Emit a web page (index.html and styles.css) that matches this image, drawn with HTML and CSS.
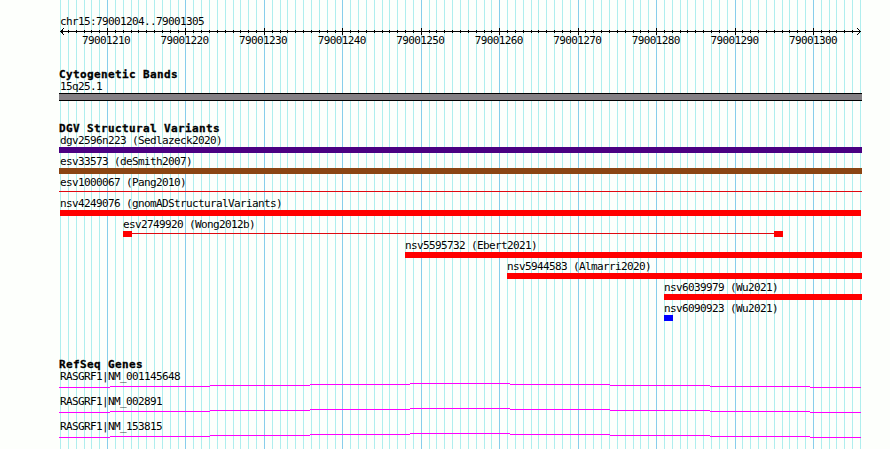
FILE: index.html
```
<!DOCTYPE html>
<html lang="en">
<head>
    <meta charset="UTF-8">
    <title>chr15:79001204..79001305</title>
    <link rel="stylesheet" href="styles.css">
</head>
<body>
    <div class="browser">
        <svg class="grid" width="890" height="449" shape-rendering="crispEdges">
            <path id="gridMinor" class="minor"/>
            <path id="gridMajor" class="major"/>
        </svg>

        <header class="ruler">
            <div class="label region">chr15:79001204..79001305</div>
            <svg class="axis" width="803" height="7" shape-rendering="crispEdges">
                <path id="ticks" d="M1 3h801v1h-801z"/>
                <path d="M2 2h1v3h-1zM3 1h1v5h-1zM4 0h1v1h-1zM4 6h1v1h-1zM800 2h1v3h-1zM799 1h1v1h-1zM799 5h1v1h-1zM798 0h1v1h-1zM798 6h1v1h-1z"/>
            </svg>
            <div class="positions">
                <span>79001210</span>
                <span>79001220</span>
                <span>79001230</span>
                <span>79001240</span>
                <span>79001250</span>
                <span>79001260</span>
                <span>79001270</span>
                <span>79001280</span>
                <span>79001290</span>
                <span>79001300</span>
            </div>
        </header>

        <section class="track cytobands">
            <h2>Cytogenetic Bands</h2>
            <div class="label full">15q25.1</div>
            <div class="band"></div>
        </section>

        <section class="track variants">
            <h2>DGV Structural Variants</h2>
            <div class="feature">
                <div class="label full">dgv2596n223 (Sedlazeck2020)</div>
                <div class="bar complex"></div>
            </div>
            <div class="feature">
                <div class="label full">esv33573 (deSmith2007)</div>
                <div class="bar gain-loss"></div>
            </div>
            <div class="feature">
                <div class="label full">esv1000067 (Pang2010)</div>
                <div class="bar thin"></div>
            </div>
            <div class="feature" style="margin-left: 1px; width: 801px">
                <div class="label">nsv4249076 (gnomADStructuralVariants)</div>
                <div class="bar loss"></div>
            </div>
            <div class="feature" style="margin-left: 64px; width: 660px">
                <div class="label">esv2749920 (Wong2012b)</div>
                <div class="bar thin ends"></div>
            </div>
            <div class="feature" style="margin-left: 346px; width: 457px">
                <div class="label">nsv5595732 (Ebert2021)</div>
                <div class="bar loss"></div>
            </div>
            <div class="feature" style="margin-left: 448px; width: 355px">
                <div class="label">nsv5944583 (Almarri2020)</div>
                <div class="bar loss"></div>
            </div>
            <div class="feature" style="margin-left: 605px; width: 198px">
                <div class="label">nsv6039979 (Wu2021)</div>
                <div class="bar loss"></div>
            </div>
            <div class="feature" style="margin-left: 605px; width: 9px">
                <div class="label">nsv6090923 (Wu2021)</div>
                <div class="bar gain"></div>
            </div>
        </section>

        <section class="track genes">
            <h2>RefSeq Genes</h2>
            <div class="gene">
                <div class="label full">RASGRF1|NM_001145648</div>
                <svg class="intron" width="803" height="5" shape-rendering="crispEdges"><path d="M0 4.5h51m0-1h100m0-1h100m0-1h100m0-1h100m0 1h100m0 1h100m0 1h100m0 1h51"/></svg>
            </div>
            <div class="gene">
                <div class="label full">RASGRF1|NM_002891</div>
                <svg class="intron" width="803" height="5" shape-rendering="crispEdges"><path d="M0 4.5h51m0-1h100m0-1h100m0-1h100m0-1h100m0 1h100m0 1h100m0 1h100m0 1h51"/></svg>
            </div>
            <div class="gene">
                <div class="label full">RASGRF1|NM_153815</div>
                <svg class="intron" width="803" height="5" shape-rendering="crispEdges"><path d="M0 4.5h51m0-1h100m0-1h100m0-1h100m0-1h100m0 1h100m0 1h100m0 1h100m0 1h51"/></svg>
            </div>
        </section>
    </div>

    <script>
        // One line per base, a darker one every 10 bases
        const start = 79001204;
        const end = 79001306;
        const step = 800 / (end - start);
        let minor = '';
        let major = '';
        let ticks = '';

        for (let pos = start; pos <= end; pos++) {
            const x = Math.floor(60.5 + (pos - start) * step);
            const line = `M${x} 0h1v449h-1z`;
            if (pos % 10 === 0) {
                major += line;
                ticks += `M${x - 59} 0h1v7h-1z`;
            } else {
                minor += line;
                if (pos > start && pos < end) {
                    ticks += `M${x - 59} 2h1v3h-1z`;
                }
            }
        }

        document.getElementById('gridMinor').setAttribute('d', minor);
        document.getElementById('gridMajor').setAttribute('d', major);
        const axis = document.getElementById('ticks');
        axis.setAttribute('d', axis.getAttribute('d') + ticks);
    </script>
</body>
</html>
```
FILE: styles.css
```
* {
    margin: 0;
    padding: 0;
    box-sizing: border-box;
}

body {
    background: #fdfffc;
    color: #000;
    font-family: "DejaVu Sans Mono", monospace;
    overflow: hidden;
}

.browser {
    position: relative;
    width: 890px;
    height: 449px;
    padding: 15px 28px 0 59px;
    overflow: hidden;
}

.grid {
    position: absolute;
    top: 0;
    left: 0;
    z-index: -1;
}

.minor {
    fill: #afeeee;
}

.major {
    fill: #87ceeb;
}

svg {
    display: block;
}

h2 {
    height: 12px;
    font-size: 11px;
    font-weight: bold;
    line-height: 14px;
    letter-spacing: 0.378px;
    white-space: nowrap;
    -webkit-text-stroke: 0.3px #000;
}

.label,
.positions {
    height: 13px;
    font-size: 11px;
    line-height: 13px;
    letter-spacing: -0.622px;
    white-space: nowrap;
}

.full,
.region {
    padding-left: 1px;
}

.ruler {
    height: 53px;
}

.positions {
    display: flex;
    justify-content: space-between;
    width: 755px;
    margin: -1px 0 0 23px;
}

.cytobands {
    height: 54px;
}

.band {
    height: 8px;
    background: #848084;
    border: solid #000;
    border-width: 1px 0;
}

.variants {
    height: 236px;
}

.feature {
    height: 21px;
}

.bar {
    height: 6px;
}

.complex {
    background: #4b0082;
}

.gain-loss {
    background: #8b4513;
}

.loss {
    background: #f00;
}

.gain {
    background: #00f;
}

.thin {
    background: linear-gradient(#e00810, #e00810) 0 2px / 100% 1px no-repeat;
}

.ends {
    display: flex;
    justify-content: space-between;
}

.ends::before,
.ends::after {
    content: "";
    width: 9px;
    background: #f00;
}

.gene {
    height: 25px;
}

.intron {
    stroke: #f0f;
    stroke-width: 1;
    fill: none;
}
```
